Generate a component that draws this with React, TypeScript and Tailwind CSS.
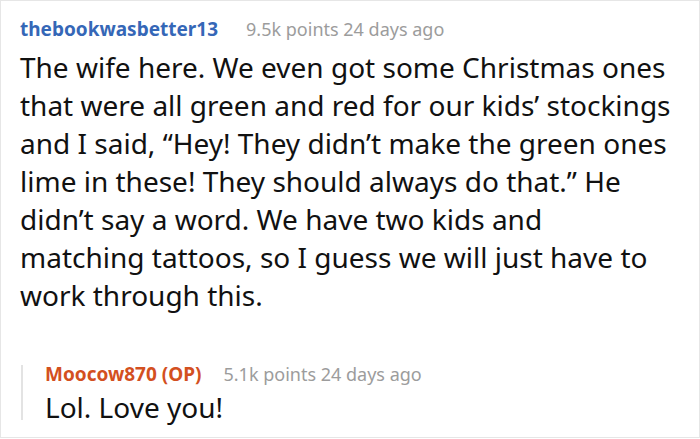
import React from "react";

const lines = [
  "The wife here. We even got some Christmas ones",
  "that were all green and red for our kids’ stockings",
  "and I said, “Hey! They didn’t make the green ones",
  "lime in these! They should always do that.” He",
  "didn’t say a word. We have two kids and",
  "matching tattoos, so I guess we will just have to",
  "work through this.",
];

export default function App() {
  return (
    <div className="w-[700px] h-[439px] bg-white" style={{ fontFamily: '"Noto Sans", sans-serif' }}>
      <div className="h-[438px] border border-[#e6e6e6] pl-[19px] pr-[4px] pt-[14px]">
        <div className="flex items-baseline gap-[28px] leading-[28px]">
          <span className="text-[19px] font-bold text-[#3567b7]">thebookwasbetter13</span>
          <span className="text-[18px] text-[#9c9c9c]">9.5k points 24 days ago</span>
        </div>
        <p className="mt-[5px] text-[28px] leading-[38px] text-[#111111] whitespace-nowrap">
          {lines.map((l, i) => (
            <span key={i} className="block">{l}</span>
          ))}
        </p>
        <div className="mt-[51px] ml-[1px] border-l-2 border-[#e3e3e3] pl-[22px] pb-[1px]">
          <div className="flex items-baseline gap-[22px] leading-[18px]">
            <span className="text-[19px] font-bold text-[#d3501f]">Moocow870 (OP)</span>
            <span className="text-[18px] text-[#9c9c9c]">5.1k points 24 days ago</span>
          </div>
          <p className="mt-[12px] text-[28px] leading-[24px] text-[#111111]">Lol. Love you!</p>
        </div>
      </div>
    </div>
  );
}
